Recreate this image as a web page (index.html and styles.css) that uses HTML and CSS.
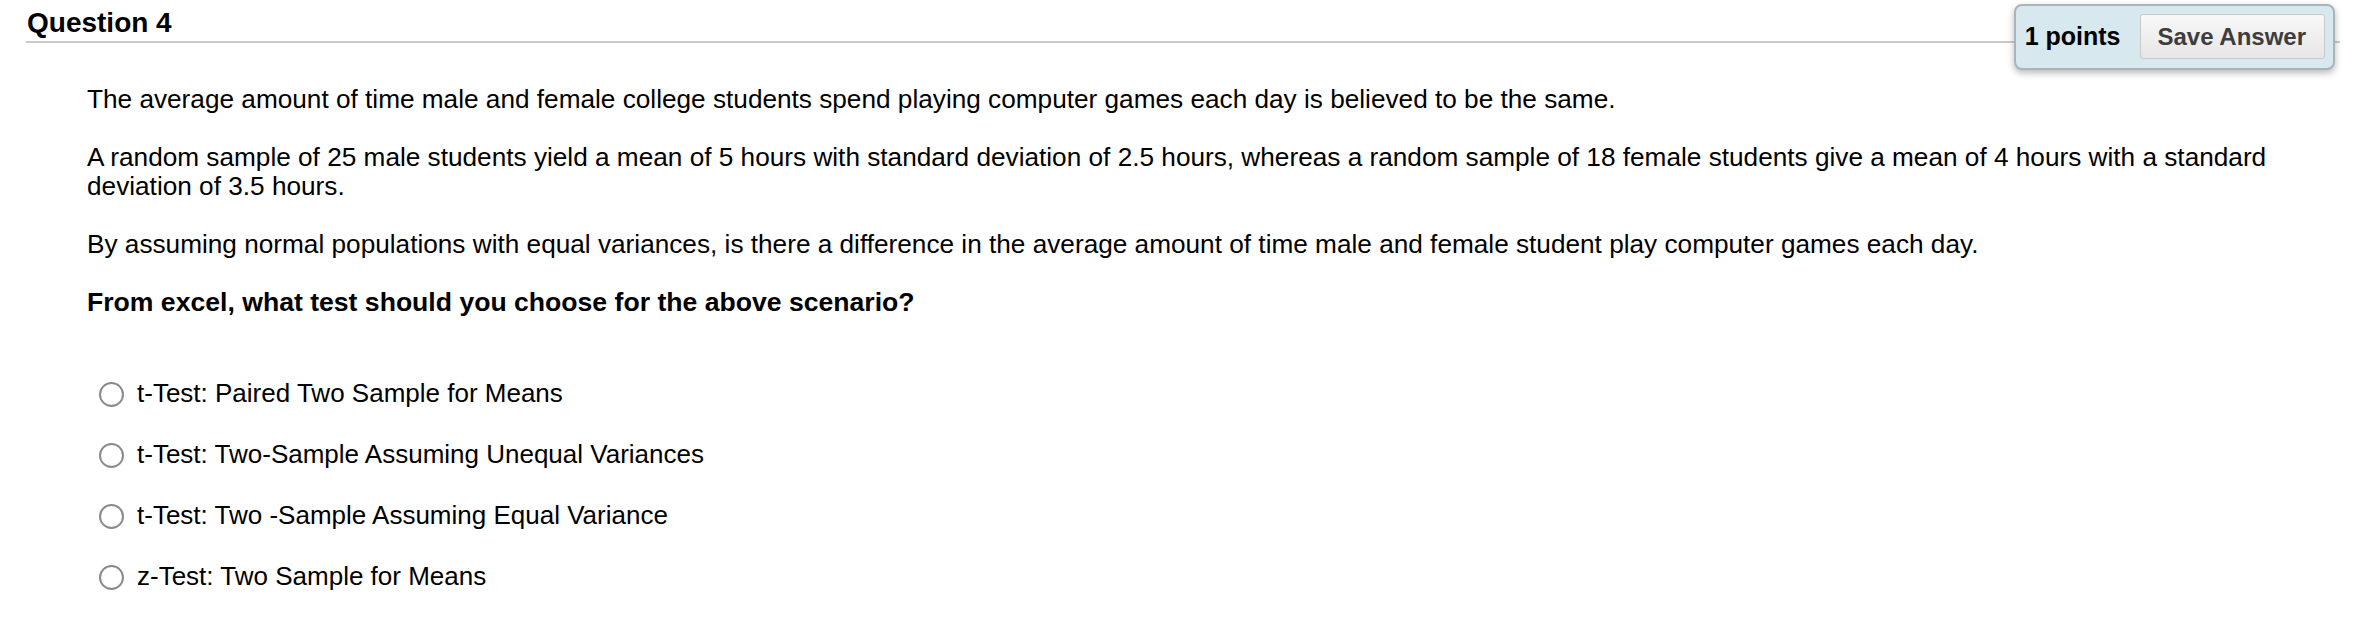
FILE: index.html
```html
<!DOCTYPE html>
<html>
<head>
<meta charset="utf-8">
<title>Question 4</title>
<link rel="stylesheet" href="styles.css">
</head>
<body>
<div class="question">
  <div class="q-header">
    <h2 class="q-title">Question 4</h2>
  </div>
  <div class="points-box">
    <span class="points">1 points</span>
    <button class="save-btn" type="button">Save Answer</button>
  </div>
  <div class="q-body">
    <p class="q-text">The average amount of time male and female college students spend playing computer games each day is believed to be the same.</p>
    <p class="q-text">A random sample of 25 male students yield a mean of 5 hours with standard deviation of 2.5 hours, whereas a random sample of 18 female students give a mean of 4 hours with a standard deviation of 3.5 hours.</p>
    <p class="q-text">By assuming normal populations with equal variances, is there a difference in the average amount of time male and female student play computer games each day.</p>
    <p class="q-text q-bold">From excel, what test should you choose for the above scenario?</p>
    <ul class="options">
      <li class="option"><span class="radio"></span><span class="opt-label">t-Test: Paired Two Sample for Means</span></li>
      <li class="option"><span class="radio"></span><span class="opt-label">t-Test: Two-Sample Assuming Unequal Variances</span></li>
      <li class="option"><span class="radio"></span><span class="opt-label">t-Test: Two -Sample Assuming Equal Variance</span></li>
      <li class="option"><span class="radio"></span><span class="opt-label">z-Test: Two Sample for Means</span></li>
    </ul>
  </div>
</div>
</body>
</html>
```
FILE: styles.css
```css
html, body {
  margin: 0;
  padding: 0;
  background: #ffffff;
}
body {
  font-family: "Liberation Sans", Arial, Helvetica, sans-serif;
  color: #000;
}
.question {
  position: relative;
}
.q-header {
  margin: 0 26px 0 26px;
  padding: 6px 0 1px 1px;
  border-bottom: 2px solid #cacaca;
}
.q-title {
  margin: 0;
  font-size: 28px;
  line-height: 34px;
  font-weight: bold;
}
.points-box {
  position: absolute;
  top: 4px;
  right: 31px;
  display: flex;
  align-items: center;
  gap: 20px;
  padding: 8px 8px 9px 9px;
  background: #d7e8ee;
  border: 2px solid #a9b5ba;
  border-radius: 8px;
  box-shadow: 0 3px 7px rgba(0, 0, 0, 0.28);
}
.points {
  font-size: 25px;
  font-weight: bold;
  line-height: 30px;
  padding-bottom: 2px;
}
.save-btn {
  font-family: "Liberation Sans", Arial, Helvetica, sans-serif;
  font-size: 24px;
  font-weight: bold;
  color: #3d3d3d;
  height: 45px;
  padding: 0 18px 0 16px;
  background: linear-gradient(#f8f8f8, #e6e6e6);
  border: 1px solid #c9c9c9;
  border-radius: 3px;
}
.q-body {
  padding: 42px 26px 0 87px;
}
.q-text {
  margin: 0 0 29px 0;
  font-size: 26.2px;
  line-height: 29px;
}
.q-bold {
  font-weight: bold;
  font-size: 26.6px;
  margin-bottom: 0;
}
.options {
  list-style: none;
  margin: 62px 0 0 0;
  padding: 0 0 0 12px;
}
.option {
  display: flex;
  align-items: center;
  height: 29px;
  margin-bottom: 32px;
  font-size: 26px;
  line-height: 29px;
}
.radio {
  box-sizing: border-box;
  width: 25px;
  height: 25px;
  border: 2px solid #8a8a8a;
  border-radius: 50%;
  background: radial-gradient(circle at 50% 40%, #ffffff 55%, #f0f0f0 100%);
  margin-right: 13px;
  margin-top: 1px;
  flex: none;
}
```
